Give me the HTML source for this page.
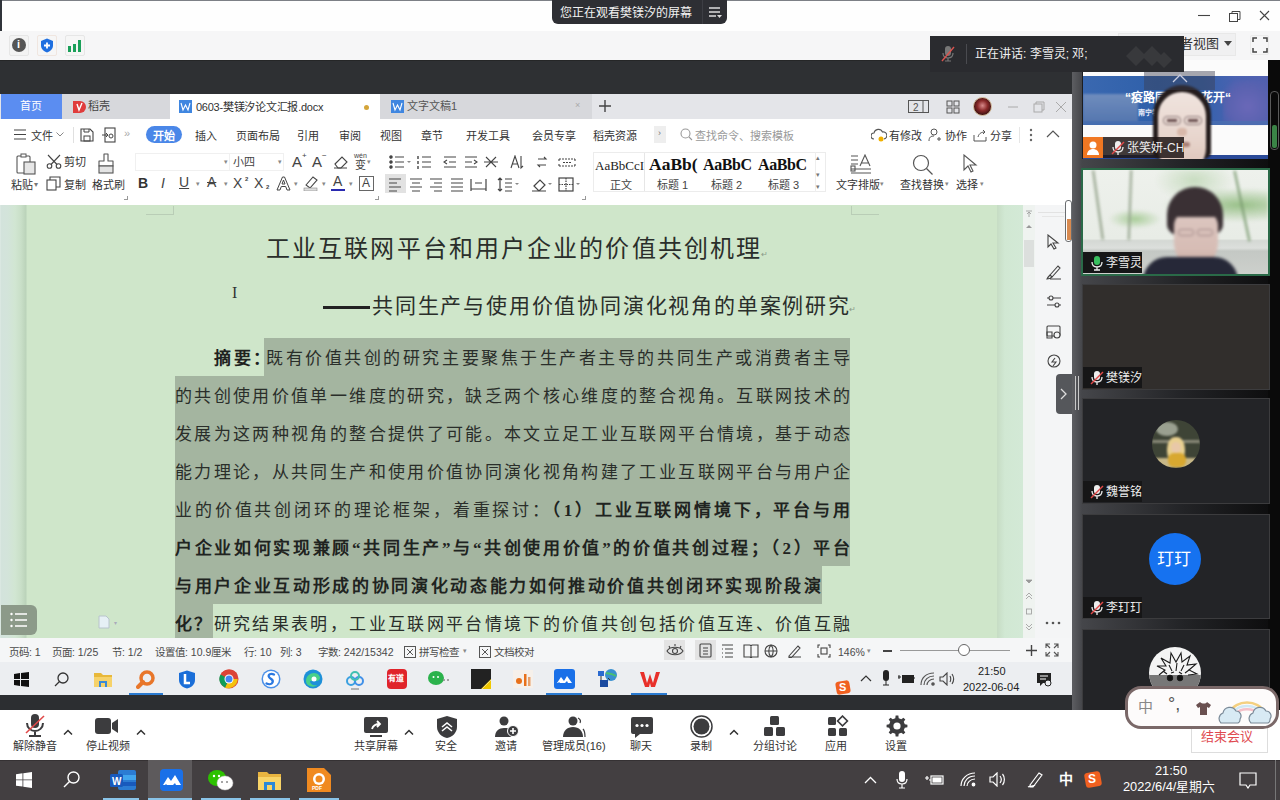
<!DOCTYPE html>
<html lang="zh-CN"><head><meta charset="utf-8">
<style>
*{margin:0;padding:0;box-sizing:border-box}
html,body{width:1280px;height:800px;overflow:hidden;background:#fff;font-family:"Liberation Sans",sans-serif;color:#333}
.a{position:absolute}
.t{position:absolute;white-space:nowrap;line-height:1}
.hl{position:absolute;background:#a4b5a0}
.dl{position:absolute;white-space:nowrap;overflow:visible;font-family:"Liberation Serif",serif;font-size:17px;line-height:20px;height:20px;color:#2a2e2a;font-weight:300;text-align:justify;text-align-last:justify;white-space:normal;word-break:break-all}
.b,.dl b{font-weight:bold;color:#202320}
</style></head><body>
<!-- title bar -->
<div class="a" style="left:0;top:0;width:1280px;height:31px;background:#fefefe;border-top:1px solid #7d8086"></div>
<div class="a" style="left:0;top:0;width:2px;height:31px;background:#30343a"></div>
<div class="a" style="left:552px;top:0;width:175px;height:24px;background:#2e2f34;border-radius:0 0 6px 6px"></div>
<!-- toolbar2 -->
<div class="a" style="left:0;top:31px;width:1280px;height:29px;background:#f6f6f7"></div>
<!-- titlebar content -->
<div class="t" style="left:560px;top:7px;font-size:12px;color:#f2f2f2">您正在观看樊镁汐的屏幕</div>
<div class="a" style="left:702px;top:0;width:1px;height:24px;background:#3d3e44"></div>
<svg class="a" style="left:708px;top:6px" width="14" height="13"><path d="M1 2h11M1 6h11M1 10h7" stroke="#ddd" stroke-width="1.4"/><path d="M9 9h5l-2.5 3z" fill="#ddd"/></svg>
<svg class="a" style="left:1195px;top:8px" width="80" height="16"><path d="M3 7.5h12" stroke="#444" stroke-width="1.1"/><rect x="34.5" y="5.5" width="8" height="8" fill="none" stroke="#444" stroke-width="1"/><path d="M37 5.5V3.5h8v8h-2.5" fill="none" stroke="#444" stroke-width="1"/><path d="M65 3l9 9M74 3l-9 9" stroke="#444" stroke-width="1.1"/></svg>
<!-- toolbar2 content -->
<div class="a" style="left:9px;top:35px;width:20px;height:21px;border:1px solid #e6e6e6;border-radius:2px;background:#f3f3f3"></div>
<div class="a" style="left:12px;top:38px;width:14px;height:14px;border-radius:50%;background:#555"></div>
<div class="t" style="left:17px;top:39px;font-size:11px;color:#fff;font-weight:bold">i</div>
<div class="a" style="left:37px;top:35px;width:20px;height:21px;border:1px solid #f0e6e0;border-radius:2px;background:#f6f6f6"></div>
<svg class="a" style="left:40px;top:38px" width="14" height="15"><path d="M7 0.5L13 3v4.5c0 3.5-3 6-6 7-3-1-6-3.5-6-7V3z" fill="#1f6fe0"/><path d="M7 4.5v6M4 7.5h6" stroke="#fff" stroke-width="1.8"/></svg>
<div class="a" style="left:65px;top:35px;width:20px;height:21px;border:1px solid #e6e6e6;border-radius:2px;background:#f6f6f6"></div>
<svg class="a" style="left:67px;top:39px" width="16" height="14"><rect x="1" y="7" width="3" height="6" fill="#1aa05a"/><rect x="6" y="5" width="3" height="8" fill="#1aa05a"/><rect x="11" y="1" width="3" height="12" fill="#1aa05a"/></svg>
<div class="a" style="left:1118px;top:33px;width:118px;height:23px;background:#f0f0f1;border:1px solid #e8e8e8"></div>
<div class="t" style="left:1180px;top:37px;font-size:13px;color:#333">者视图</div>
<svg class="a" style="left:1224px;top:41px" width="8" height="6"><path d="M0 0h8l-4 5z" fill="#444"/></svg>
<div class="a" style="left:1250px;top:35px;width:19px;height:20px;border:1px solid #ebebeb;border-radius:2px"></div>
<svg class="a" style="left:1252px;top:37px" width="16" height="16"><path d="M1 5V1h4M11 1h4v4M15 11v4h-4M5 15H1v-4" fill="none" stroke="#444" stroke-width="1.5"/></svg>
<!-- dark band -->
<div class="a" style="left:0;top:60px;width:1072px;height:34px;background:#2e3033;border-top:1px solid #252627"></div>
<!-- WPS tab bar -->
<div class="a" style="left:0;top:94px;width:1072px;height:25px;background:#e4e5e9"></div>
<div class="a" style="left:1px;top:94px;width:61px;height:25px;background:#5b8df1"></div>
<div class="a" style="left:62px;top:94px;width:108px;height:25px;background:#d7d8dc"></div>
<div class="a" style="left:170px;top:94px;width:210px;height:25px;background:#fff"></div>
<div class="a" style="left:380px;top:94px;width:212px;height:25px;background:#d7d8dc"></div>
<!-- menu + ribbon -->
<div class="a" style="left:0;top:119px;width:1072px;height:86px;background:#fff"></div>
<!-- wps tabs content -->
<div class="t" style="left:20px;top:101px;font-size:11px;color:#fff">首页</div>
<svg class="a" style="left:72px;top:100px" width="14" height="14"><path d="M1 1h7a6 6 0 0 1 0 12H1z" fill="#e03c3c"/><path d="M5 4l2 6 3-7" fill="none" stroke="#fff" stroke-width="1.4"/></svg>
<div class="t" style="left:88px;top:101px;font-size:11px;color:#444">稻壳</div>
<div class="a" style="left:179px;top:100px;width:13px;height:13px;background:#3f86e0"></div>
<svg class="a" style="left:179px;top:100px" width="13" height="13"><path d="M2 3l2 7 2.5-5 2.5 5 2-7" fill="none" stroke="#fff" stroke-width="1.1"/></svg>
<div class="t" style="left:196px;top:102px;font-size:11px;color:#333;letter-spacing:-0.25px">0603-樊镁汐论文汇报.docx</div>
<div class="a" style="left:364px;top:105px;width:5px;height:5px;border-radius:50%;background:#d4a53a"></div>
<div class="a" style="left:391px;top:100px;width:13px;height:13px;background:#3f86e0"></div>
<svg class="a" style="left:391px;top:100px" width="13" height="13"><path d="M2 3l2 7 2.5-5 2.5 5 2-7" fill="none" stroke="#fff" stroke-width="1.1"/></svg>
<div class="t" style="left:407px;top:101px;font-size:11px;color:#555">文字文稿1</div>
<div class="t" style="left:575px;top:101px;font-size:9px;color:#aaa">×</div>
<svg class="a" style="left:599px;top:100px" width="12" height="12"><path d="M6 0v12M0 6h12" stroke="#444" stroke-width="1.4"/></svg>
<svg class="a" style="left:908px;top:99px" width="24" height="15"><rect x="0.5" y="1.5" width="20" height="12" fill="none" stroke="#555" stroke-width="1"/><path d="M15 1v13" stroke="#555"/><text x="5" y="11.5" font-size="10" fill="#555" font-family="Liberation Sans">2</text></svg>
<svg class="a" style="left:946px;top:100px" width="14" height="14"><rect x="1" y="1" width="5" height="5" fill="none" stroke="#555"/><rect x="8" y="1" width="5" height="5" fill="none" stroke="#555"/><rect x="1" y="8" width="5" height="5" fill="none" stroke="#555"/><rect x="8" y="8" width="5" height="5" fill="none" stroke="#555"/></svg>
<div class="a" style="left:973px;top:97px;width:19px;height:19px;border-radius:50%;background:radial-gradient(circle at 50% 45%,#d88a8a 0,#8a2a2a 40%,#3a1010 75%);border:1px solid #c9b090"></div>
<svg class="a" style="left:1006px;top:100px" width="62" height="14"><path d="M2 7h10" stroke="#aaa"/><rect x="28" y="4" width="8" height="8" fill="none" stroke="#aaa"/><path d="M30 4V2h8v8h-2" fill="none" stroke="#aaa"/><path d="M50 2l10 10M60 2L50 12" stroke="#aaa"/></svg>
<!-- menu row -->
<svg class="a" style="left:14px;top:129px" width="12" height="11"><path d="M0 1h12M0 5.5h12M0 10h12" stroke="#444" stroke-width="1.2"/></svg>
<div class="t" style="left:31px;top:130.5px;font-size:11px;color:#333">文件</div>
<svg class="a" style="left:56px;top:132px" width="8" height="5"><path d="M0.5 0.5l3.5 3.5 3.5-3.5" fill="none" stroke="#888"/></svg>
<div class="a" style="left:73px;top:127px;width:1px;height:16px;background:#e0e0e0"></div>
<svg class="a" style="left:80px;top:128px" width="14" height="14"><path d="M1 1h9l3 3v9H1z" fill="none" stroke="#444" stroke-width="1.1"/><rect x="4" y="8" width="6" height="5" fill="none" stroke="#444"/><path d="M4 1v3h5V1" fill="none" stroke="#444"/></svg>
<svg class="a" style="left:102px;top:127px" width="14" height="16"><rect x="3" y="1" width="10" height="14" fill="none" stroke="#444" stroke-width="1.1"/><path d="M0 8h6M4 6l2 2-2 2" fill="none" stroke="#444"/><circle cx="9" cy="9" r="2" fill="none" stroke="#444"/></svg>
<div class="t" style="left:124px;top:128px;font-size:11px;color:#aaa">»</div>
<div class="a" style="left:146px;top:126px;width:36px;height:17px;border-radius:9px;background:#4a87e8"></div>
<div class="t" style="left:153px;top:130.5px;font-size:11px;color:#fff;font-weight:bold">开始</div>
<div class="t" style="left:195px;top:130.5px;font-size:11px;color:#333">插入</div>
<div class="t" style="left:236px;top:130.5px;font-size:11px;color:#333">页面布局</div>
<div class="t" style="left:297px;top:130.5px;font-size:11px;color:#333">引用</div>
<div class="t" style="left:339px;top:130.5px;font-size:11px;color:#333">审阅</div>
<div class="t" style="left:380px;top:130.5px;font-size:11px;color:#333">视图</div>
<div class="t" style="left:421px;top:130.5px;font-size:11px;color:#333">章节</div>
<div class="t" style="left:466px;top:130.5px;font-size:11px;color:#333">开发工具</div>
<div class="t" style="left:532px;top:130.5px;font-size:11px;color:#333">会员专享</div>
<div class="t" style="left:593px;top:130.5px;font-size:11px;color:#333">稻壳资源</div>
<div class="a" style="left:654px;top:126px;width:12px;height:17px;background:#eeeeee"></div>
<div class="t" style="left:658px;top:129px;font-size:9px;color:#777">›</div>
<svg class="a" style="left:680px;top:128px" width="13" height="13"><circle cx="5.5" cy="5.5" r="4.5" fill="none" stroke="#999" stroke-width="1.1"/><path d="M9 9l3 3" stroke="#999" stroke-width="1.1"/></svg>
<div class="t" style="left:695px;top:130.5px;font-size:11px;color:#999">查找命令、搜索模板</div>
<svg class="a" style="left:871px;top:128px" width="16" height="14"><path d="M3 11a3 3 0 0 1 0-6 4.5 4.5 0 0 1 8.5-1A3.5 3.5 0 0 1 13 11" fill="none" stroke="#555" stroke-width="1.1"/><circle cx="10" cy="11" r="2.5" fill="#f0b000"/></svg>
<div class="t" style="left:889px;top:130.5px;font-size:11px;color:#333">有修改</div>
<svg class="a" style="left:928px;top:128px" width="14" height="14"><circle cx="6" cy="4" r="3" fill="none" stroke="#555"/><path d="M1 13c0-4 2-5 5-5M9 11h4M11 9v4" fill="none" stroke="#555"/></svg>
<div class="t" style="left:945px;top:130.5px;font-size:11px;color:#333">协作</div>
<svg class="a" style="left:973px;top:128px" width="14" height="14"><path d="M1 7v6h12V9" fill="none" stroke="#555"/><path d="M5 9c1-4 4-5 7-5M10 2l2 2-2 2" fill="none" stroke="#555"/></svg>
<div class="t" style="left:990px;top:130.5px;font-size:11px;color:#333">分享</div>
<div class="a" style="left:1019px;top:127px;width:1px;height:16px;background:#e6e6e6"></div>
<svg class="a" style="left:1029px;top:128px" width="4" height="14"><circle cx="2" cy="2" r="1.2" fill="#666"/><circle cx="2" cy="7" r="1.2" fill="#666"/><circle cx="2" cy="12" r="1.2" fill="#666"/></svg>
<svg class="a" style="left:1046px;top:130px" width="14" height="8"><path d="M1 7l6-6 6 6" fill="none" stroke="#555" stroke-width="1.2"/></svg>
<!-- ribbon -->
<svg class="a" style="left:15px;top:153px" width="22" height="22"><rect x="2" y="3" width="13" height="17" rx="1" fill="none" stroke="#555" stroke-width="1.1"/><rect x="6" y="1" width="5" height="3" fill="#fff" stroke="#555"/><rect x="9" y="9" width="11" height="12" fill="#e6e6e6" stroke="#555" stroke-width="1.1"/></svg>
<div class="t" style="left:11px;top:179.5px;font-size:11px;color:#333">粘贴</div><div class="t" style="left:34px;top:181px;font-size:8px;color:#777">▾</div>
<svg class="a" style="left:46px;top:154px" width="16" height="15"><circle cx="3.5" cy="12" r="2.3" fill="none" stroke="#444" stroke-width="1.1"/><circle cx="12.5" cy="12" r="2.3" fill="none" stroke="#444" stroke-width="1.1"/><path d="M5 10.5L14 1M11 10.5L2 1" stroke="#444" stroke-width="1.1"/></svg>
<div class="t" style="left:64px;top:157px;font-size:11px;color:#333">剪切</div>
<svg class="a" style="left:46px;top:176px" width="15" height="15"><rect x="1" y="4" width="9" height="10" fill="none" stroke="#444" stroke-width="1.1"/><path d="M4 4V1h10v10h-4" fill="none" stroke="#444" stroke-width="1.1"/></svg>
<div class="t" style="left:64px;top:179.5px;font-size:11px;color:#333">复制</div>
<svg class="a" style="left:97px;top:153px" width="18" height="22"><path d="M7 1h4v7h5v5H2V8h5z" fill="#fff" stroke="#555" stroke-width="1.1" stroke-linejoin="round"/><rect x="2" y="13" width="14" height="7" fill="#e4e4e4" stroke="#555" stroke-width="1.1"/></svg>
<div class="t" style="left:92px;top:179.5px;font-size:11px;color:#333">格式刷</div>
<div class="a" style="left:135px;top:153px;width:95px;height:18px;border:1px solid #f0f0f0"></div>
<div class="a" style="left:230px;top:153px;width:54px;height:18px;border:1px solid #f0f0f0;border-left:none"></div>
<div class="t" style="left:224px;top:158px;font-size:7px;color:#888">▾</div>
<div class="t" style="left:233px;top:157px;font-size:11px;color:#444">小四</div>
<div class="t" style="left:278px;top:158px;font-size:7px;color:#888">▾</div>
<div class="t" style="left:292px;top:154px;font-size:15px;color:#444">A</div><div class="t" style="left:302px;top:152px;font-size:8px;color:#444">+</div>
<div class="t" style="left:312px;top:154px;font-size:15px;color:#444">A</div><div class="t" style="left:322px;top:152px;font-size:8px;color:#444">−</div>
<svg class="a" style="left:333px;top:155px" width="15" height="14"><path d="M2 9l7-7 5 5-6 6H5z" fill="none" stroke="#444" stroke-width="1.1"/><path d="M1 13h13" stroke="#444"/></svg>
<div class="t" style="left:354px;top:152px;font-size:7px;color:#444">wén</div><div class="t" style="left:355px;top:160px;font-size:11px;color:#444">变</div><div class="t" style="left:367px;top:158px;font-size:7px;color:#888">▾</div>
<div class="t" style="left:138px;top:176px;font-size:14px;color:#333;font-weight:bold">B</div>
<div class="t" style="left:161px;top:176px;font-size:14px;color:#444;font-style:italic">I</div>
<div class="t" style="left:179px;top:175px;font-size:14px;color:#444;text-decoration:underline">U</div><div class="t" style="left:196px;top:180px;font-size:7px;color:#888">▾</div>
<div class="t" style="left:207px;top:175px;font-size:14px;color:#444;text-decoration:line-through">A</div><div class="t" style="left:224px;top:180px;font-size:7px;color:#888">▾</div>
<div class="t" style="left:233px;top:176px;font-size:14px;color:#444">X</div><div class="t" style="left:245px;top:176px;font-size:6px;color:#444;font-weight:bold">2</div>
<div class="t" style="left:254px;top:176px;font-size:14px;color:#444">X</div><div class="t" style="left:266px;top:184px;font-size:6px;color:#444;font-weight:bold">2</div>
<svg class="a" style="left:276px;top:176px" width="15" height="15" fill="none" stroke="#444" stroke-width="1"><path d="M1 14L6.5 1h2L14 14h-3l-1.3-3.5H5.3L4 14zM6 8h3L7.5 4z"/></svg><div class="t" style="left:294px;top:180px;font-size:7px;color:#888">▾</div>
<svg class="a" style="left:303px;top:175px" width="16" height="16"><path d="M3 10l7-8 4 3-7 8z" fill="none" stroke="#444" stroke-width="1.1"/><rect x="1" y="13" width="13" height="3" fill="#ddd" stroke="#888" stroke-width="0.6"/></svg><div class="t" style="left:322px;top:180px;font-size:7px;color:#888">▾</div>
<div class="t" style="left:333px;top:174px;font-size:14px;color:#444">A</div><div class="a" style="left:331px;top:189px;width:14px;height:2px;background:#2a2ab0"></div><div class="t" style="left:349px;top:180px;font-size:7px;color:#888">▾</div>
<div class="a" style="left:359px;top:176px;width:15px;height:15px;border:1px solid #666"></div><div class="t" style="left:362px;top:177px;font-size:12px;color:#444">A</div>
<div class="a" style="left:124px;top:196px;width:4px;height:4px;border-right:1px solid #999;border-bottom:1px solid #999"></div>
<div class="a" style="left:375px;top:196px;width:4px;height:4px;border-right:1px solid #999;border-bottom:1px solid #999"></div>
<div class="a" style="left:582px;top:196px;width:4px;height:4px;border-right:1px solid #999;border-bottom:1px solid #999"></div>
<svg class="a" style="left:389px;top:155px" width="195" height="15" fill="none" stroke="#444" stroke-width="1.1">
<circle cx="2" cy="2" r="1.2" fill="#444"/><circle cx="2" cy="7" r="1.2" fill="#444"/><circle cx="2" cy="12" r="1.2" fill="#444"/><path d="M6 2h9M6 7h9M6 12h9"/><path d="M18 6l2 2 2-2" fill="#888" stroke="none"/>
<path d="M29 1v3M29 6v3M29 11v3" stroke-width="1.4"/><path d="M33 2h9M33 7h9M33 12h9"/>
<path d="M55 2h12M60 7h7M55 12h12M58 5l-3 2 3 2"/>
<path d="M76 2h12M76 7h7M76 12h12M85 5l3 2-3 2"/>
<path d="M97 2l5 5 5-5M97 12l5-5 5 5M95 7h14"/>
<path d="M122 13l4-12 4 12M123 9h6M132 1v12l2-2"/>
<path d="M149 4h8l-2-2M157 10h-8l2 2"/>
<path d="M170 4h16M170 11h16M170 4v3M186 4v3M170 11v-3M186 11v-3M174 7.5h8" stroke-dasharray="2 1"/>
</svg>
<div class="a" style="left:385px;top:174px;width:21px;height:19px;background:#e2e2e2"></div>
<svg class="a" style="left:389px;top:177px" width="195" height="15" fill="none" stroke="#444" stroke-width="1.2">
<path d="M0 2h12M0 6h8M0 10h12M0 14h8"/>
<path d="M21 2h12M23 6h8M21 10h12M23 14h8"/>
<path d="M41 2h12M45 6h8M41 10h12M45 14h8"/>
<path d="M62 2h12M62 6h12M62 10h12M62 14h12"/>
<path d="M82 2v12M97 2v12M82 12h15M86 6h7"/>
<path d="M111 1v13M109 3l2-2 2 2M109 12l2 2 2-2M116 2h7M116 6h7M116 10h7M116 14h7"/><path d="M126 6l2 2 2-2" fill="#888" stroke="none"/>
<path d="M145 9l6-6 5 5-6 6zM143 14h14"/><path d="M159 6l2 2 2-2" fill="#888" stroke="none"/>
<rect x="170" y="1" width="14" height="13"/><path d="M177 1v13M170 7.5h14" stroke-dasharray="1.5 1"/><path d="M187 6l2 2 2-2" fill="#888" stroke="none"/>
</svg>
<div class="a" style="left:593px;top:152px;width:52px;height:40px;border:1px solid #e6e6e6"></div>
<div class="t" style="left:595px;top:159px;font-size:13px;color:#222;font-family:'Liberation Serif',serif">AaBbCcI</div>
<div class="t" style="left:610px;top:179.5px;font-size:11px;color:#444">正文</div>
<div class="a" style="left:593px;top:152px;width:233px;height:40px;border:1px solid #ececec"></div><div class="t" style="left:649px;top:156px;font-size:17.5px;color:#111;font-weight:bold;font-family:'Liberation Serif',serif">AaBb(</div>
<div class="t" style="left:657px;top:179.5px;font-size:11px;color:#444">标题 1</div>
<div class="t" style="left:703px;top:157px;font-size:16px;color:#111;font-weight:bold;font-family:'Liberation Serif',serif;letter-spacing:-0.4px">AaBbC</div>
<div class="t" style="left:711px;top:179.5px;font-size:11px;color:#444">标题 2</div>
<div class="t" style="left:758px;top:157px;font-size:16px;color:#111;font-weight:bold;font-family:'Liberation Serif',serif;letter-spacing:-0.4px">AaBbC</div>
<div class="t" style="left:768px;top:179.5px;font-size:11px;color:#444">标题 3</div>
<div class="a" style="left:815px;top:152px;width:1px;height:40px;background:#eee"></div>
<div class="t" style="left:816px;top:154px;font-size:7px;color:#777">▴</div>
<div class="t" style="left:816px;top:171px;font-size:7px;color:#777">▾</div>
<div class="t" style="left:816px;top:183px;font-size:7px;color:#777">▾</div>
<svg class="a" style="left:850px;top:154px" width="22" height="20" fill="none" stroke="#555" stroke-width="1.1"><path d="M1 2h7M1 6h7M1 10h7M10 12l5-11 5 11M11.5 9h7M1 15h20M1 19h20"/><rect x="1" y="12" width="4" height="5"/></svg>
<div class="t" style="left:836px;top:179.5px;font-size:11px;color:#333">文字排版</div><div class="t" style="left:880px;top:180px;font-size:7px;color:#888">▾</div>
<svg class="a" style="left:912px;top:154px" width="22" height="22" fill="none" stroke="#555" stroke-width="1.2"><circle cx="9" cy="9" r="7.5"/><path d="M14.5 14.5l6 6"/></svg>
<div class="t" style="left:900px;top:179.5px;font-size:11px;color:#333">查找替换</div><div class="t" style="left:945px;top:180px;font-size:7px;color:#888">▾</div>
<svg class="a" style="left:962px;top:154px" width="16" height="20" fill="none" stroke="#555" stroke-width="1.1"><path d="M2 1v15l4-4 3 6 2-1-3-6h6z"/></svg>
<div class="t" style="left:956px;top:179.5px;font-size:11px;color:#333">选择</div><div class="t" style="left:980px;top:180px;font-size:7px;color:#888">▾</div>
<!-- doc area -->
<div class="a" style="left:0;top:205px;width:1072px;height:433px;background:#d2e6d9"></div><div class="a" style="left:0;top:205px;width:28px;height:433px;background:linear-gradient(90deg,#dde9e4 0,#d3e3dc 1.5px,#d3e4da 8px,#d1e6d2 15px,#c9dfc8 21px,#bcd4bb 25.5px,#cde4c9 27.5px)"></div>
<div class="a" style="left:27px;top:205px;width:970px;height:433px;background:#cfe6ca"></div>
<div class="a" style="left:997px;top:205px;width:26px;height:433px;background:linear-gradient(90deg,#c6dcc4,#d1e8d3 30%,#d3e9d6)"></div>
<div class="a" style="left:1023px;top:205px;width:12px;height:433px;background:#eef2ee"></div>
<div class="a" style="left:1035px;top:205px;width:37px;height:433px;background:#f4f5f6"></div>
<!-- doc content -->
<div class="a" style="left:146px;top:214px;width:28px;height:1px;background:#b9cdb6"></div>
<div class="a" style="left:173px;top:206px;width:1px;height:9px;background:#b9cdb6"></div>
<div class="a" style="left:851px;top:214px;width:28px;height:1px;background:#b9cdb6"></div>
<div class="a" style="left:851px;top:206px;width:1px;height:9px;background:#b9cdb6"></div>
<div class="hl" style="left:264px;top:338px;width:586px;height:38px"></div>
<div class="hl" style="left:175px;top:376px;width:675px;height:190px"></div>
<div class="hl" style="left:175px;top:566px;width:647px;height:38px"></div>
<div class="hl" style="left:175px;top:604px;width:38px;height:34px"></div>
<div class="dl" style="left:266px;top:236px;width:494px;font-size:24px;line-height:26px;height:26px">工业互联网平台和用户企业的价值共创机理</div>
<div class="t" style="left:761px;top:251px;font-size:8px;color:#8a9a88">↵</div>
<div class="a" style="left:323px;top:306px;width:47px;height:2.5px;background:#222"></div><div class="dl" style="left:372px;top:294px;width:477px;font-size:21px;line-height:24px;height:24px">共同生产与使用价值协同演化视角的单案例研究</div>
<div class="t" style="left:849px;top:306px;font-size:8px;color:#8a9a88">↵</div>
<div class="t b" style="left:214px;top:349.5px;font-size:17px;letter-spacing:2.6px;color:#1e221e">摘要：</div>
<div class="dl" style="left:266px;top:348.5px;width:584px">既有价值共创的研究主要聚焦于生产者主导的共同生产或消费者主导</div>
<div class="dl" style="left:175px;top:386.5px;width:675px">的共创使用价值单一维度的研究，缺乏两个核心维度的整合视角。互联网技术的</div>
<div class="dl" style="left:175px;top:424.5px;width:675px">发展为这两种视角的整合提供了可能。本文立足工业互联网平台情境，基于动态</div>
<div class="dl" style="left:175px;top:462.5px;width:675px">能力理论，从共同生产和使用价值协同演化视角构建了工业互联网平台与用户企</div>
<div class="dl" style="left:175px;top:500.5px;width:675px">业的价值共创闭环的理论框架，着重探讨：<b>（1）工业互联网情境下，平台与用</b></div>
<div class="dl b" style="left:175px;top:538.5px;width:675px">户企业如何实现兼顾“共同生产”与“共创使用价值”的价值共创过程；（2）平台</div>
<div class="dl b" style="left:175px;top:576.5px;width:646px">与用户企业互动形成的协同演化动态能力如何推动价值共创闭环实现阶段演</div>
<div class="dl" style="left:175px;top:614.5px;width:675px"><b>化？</b>研究结果表明，工业互联网平台情境下的价值共创包括价值互连、价值互融</div>
<div class="t" style="left:232px;top:285px;font-size:16px;color:#333;font-family:'Liberation Serif',serif">I</div>
<!-- doc side -->
<div class="a" style="left:1023px;top:205px;width:12px;height:433px;background:#eff3f0"></div>
<svg class="a" style="left:1024px;top:209px" width="10" height="24"><path d="M2 2h6M5 3v5M3 5l2-2 2 2" fill="none" stroke="#999" stroke-width="0.8"/><path d="M2 19l3-3 3 3z" fill="#999"/></svg>
<div class="a" style="left:1024px;top:240px;width:10px;height:27px;background:#dcdfdd"></div>
<svg class="a" style="left:1024px;top:578px" width="10" height="56" fill="none" stroke="#999" stroke-width="0.8"><path d="M2 2l3 3 3-3z" fill="#999"/><path d="M2 18l3-3 3 3M2 21l3-3 3 3"/><rect x="2.5" y="31" width="5" height="5"/><path d="M2 46l3 3 3-3M2 49l3 3 3-3"/></svg>
<div class="a" style="left:1038px;top:212px;width:28px;height:1px;background:#e2e2e2"></div>
<div class="a" style="left:1042px;top:216px;width:22px;height:1px;background:#e6e6e6"></div>
<svg class="a" style="left:1046px;top:234px" width="14" height="16" fill="none" stroke="#444" stroke-width="1.1"><path d="M2 1v12l3-3 3 5 2-1-3-5h5z"/></svg>
<svg class="a" style="left:1046px;top:264px" width="16" height="16" fill="none" stroke="#444" stroke-width="1.1"><path d="M4 11l8-9 2 2-8 9zM1 15c1-2 2-3 3-4l2 2c-1 1-3 2-5 2zM4 15h11"/></svg>
<svg class="a" style="left:1046px;top:294px" width="16" height="16" fill="none" stroke="#444" stroke-width="1.1"><path d="M1 4h14M1 11h14"/><circle cx="5" cy="4" r="2" fill="#f4f5f6"/><circle cx="11" cy="11" r="2" fill="#f4f5f6"/></svg>
<svg class="a" style="left:1046px;top:324px" width="16" height="16" fill="none" stroke="#444" stroke-width="1.1"><rect x="1" y="2" width="13" height="10" rx="1"/><path d="M1 8h5v6H1z"/><circle cx="11" cy="11" r="3" fill="#f4f5f6"/></svg>
<svg class="a" style="left:1046px;top:354px" width="16" height="16" fill="none" stroke="#444" stroke-width="1.1"><path d="M8 1a6 6 0 1 1 0 12 6 6 0 1 1 0-12zM9 4l-3 4h4l-3 4"/></svg>
<svg class="a" style="left:1045px;top:620px" width="16" height="6"><circle cx="2" cy="3" r="1.3" fill="#555"/><circle cx="8" cy="3" r="1.3" fill="#555"/><circle cx="14" cy="3" r="1.3" fill="#555"/></svg>
<div class="a" style="left:1056px;top:374px;width:16px;height:40px;background:#55575b;border-radius:4px 0 0 4px"></div>
<svg class="a" style="left:1060px;top:388px" width="8" height="12"><path d="M1 1l5 5-5 5" fill="none" stroke="#ddd" stroke-width="1.3"/></svg>
<div class="a" style="left:1065px;top:200px;width:7px;height:42px;border:1.5px solid #6a6d70;border-radius:3px;background:#fff"></div>
<div class="a" style="left:1066.5px;top:219px;width:4px;height:21px;background:#d88a50"></div>
<!-- nav button -->
<div class="a" style="left:1px;top:605px;width:36px;height:30px;background:#8c9a89;border-radius:0 6px 6px 0"></div>
<svg class="a" style="left:10px;top:612px" width="18" height="16"><circle cx="1.5" cy="2" r="1.2" fill="#fff"/><circle cx="1.5" cy="8" r="1.2" fill="#fff"/><circle cx="1.5" cy="14" r="1.2" fill="#fff"/><path d="M5 2h12M5 8h12M5 14h12" stroke="#fff" stroke-width="1.5"/></svg>
<svg class="a" style="left:98px;top:615px" width="16" height="14"><path d="M1 1h7l3 3v9H1z" fill="#e6f0f5" stroke="#b8c4cc"/></svg>
<div class="t" style="left:114px;top:620px;font-size:6px;color:#aab">▾</div>
<!-- status bar -->
<div class="a" style="left:0;top:638px;width:1072px;height:24px;background:#f5f6f7"></div>
<!-- status content --><!-- status content -->
<div class="t" style="left:9px;top:646.5px;font-size:10.5px;color:#4a4a4a">页码: 1</div>
<div class="t" style="left:52px;top:646.5px;font-size:10.5px;color:#4a4a4a">页面: 1/25</div>
<div class="t" style="left:112px;top:646.5px;font-size:10.5px;color:#4a4a4a">节: 1/2</div>
<div class="t" style="left:155px;top:646.5px;font-size:10.5px;color:#4a4a4a">设置值: 10.9厘米</div>
<div class="t" style="left:244px;top:646.5px;font-size:10.5px;color:#4a4a4a">行: 10</div>
<div class="t" style="left:280px;top:646.5px;font-size:10.5px;color:#4a4a4a">列: 3</div>
<div class="t" style="left:318px;top:646.5px;font-size:10.5px;color:#4a4a4a">字数: 242/15342</div>
<svg class="a" style="left:404px;top:646px" width="12" height="12"><rect x="0.5" y="0.5" width="11" height="11" fill="none" stroke="#555"/><path d="M3 3l6 6M9 3l-6 6" stroke="#555"/></svg>
<div class="t" style="left:419px;top:646.5px;font-size:10.5px;color:#4a4a4a">拼写检查</div><div class="t" style="left:463px;top:647px;font-size:7px;color:#888">▾</div>
<svg class="a" style="left:479px;top:646px" width="12" height="12"><rect x="0.5" y="0.5" width="11" height="11" fill="none" stroke="#555"/><path d="M3 3l6 6M9 3l-6 6" stroke="#555"/></svg>
<div class="t" style="left:494px;top:646.5px;font-size:10.5px;color:#4a4a4a">文档校对</div>
<div class="a" style="left:664px;top:640px;width:21px;height:20px;background:#e3e3e3"></div>
<svg class="a" style="left:666px;top:643px" width="18" height="14" fill="none" stroke="#444" stroke-width="1.1"><path d="M1 8c3-5 13-5 16 0-3 5-13 5-16 0z"/><circle cx="9" cy="8" r="2.5"/><path d="M3 3l1 2M9 1v2M15 3l-1 2"/></svg>
<div class="a" style="left:695px;top:640px;width:21px;height:20px;background:#e3e3e3"></div>
<svg class="a" style="left:698px;top:643px" width="140" height="15" fill="none" stroke="#444" stroke-width="1.1">
<rect x="2" y="1" width="11" height="13" rx="1"/><path d="M5 5h5M5 8h5M5 11h5"/>
<path d="M24 2h11M27 6h8M27 10h8M27 14h8M24 6h1M24 10h1M24 14h1"/>
<path d="M46 2h6l1 1 1-1h6v12h-6l-1 1-1-1h-6zM53 3v11"/>
<circle cx="73" cy="8" r="6"/><path d="M67 8h12M73 2c-3 3-3 9 0 12M73 2c3 3 3 9 0 12"/>
<path d="M91 13l9-10 2 2-9 10h-2zM91 14h12"/>
<path d="M122 2h-2v3M130 2h2v3M122 14h-2v-3M130 14h2v-3"/><rect x="123" y="5" width="6" height="6"/>
</svg>
<div class="t" style="left:838px;top:646.5px;font-size:10.5px;color:#4a4a4a">146%</div><div class="t" style="left:867px;top:647px;font-size:7px;color:#888">▾</div>
<div class="a" style="left:883px;top:650px;width:9px;height:1.5px;background:#444"></div>
<div class="a" style="left:900px;top:650px;width:110px;height:1px;background:#999"></div>
<div class="a" style="left:958px;top:644px;width:12px;height:12px;border-radius:50%;background:#fff;border:1.2px solid #666"></div>
<svg class="a" style="left:1026px;top:645px" width="11" height="11"><path d="M5.5 0v11M0 5.5h11" stroke="#444" stroke-width="1.4"/></svg>
<svg class="a" style="left:1045px;top:643px" width="14" height="14" fill="none" stroke="#555" stroke-width="1.1"><path d="M1 5V1h4M1 1l4 4M13 5V1H9M13 1L9 5M1 9v4h4M1 13l4-4M13 9v4H9M13 13L9 9"/></svg>
<!-- inner taskbar -->
<div class="a" style="left:0;top:662px;width:1072px;height:33px;background:#eceef1"></div>
<!-- inner taskbar content -->
<svg class="a" style="left:14px;top:672px" width="15" height="15"><path d="M0 2l6-1v6H0zM7 1l8-1v7H7zM0 8h6v6l-6-1zM7 8h8v7l-8-1z" fill="#111"/></svg>
<svg class="a" style="left:54px;top:672px" width="15" height="15" fill="none" stroke="#333" stroke-width="1.3"><circle cx="9" cy="6" r="5"/><path d="M5.5 9.5L1 14"/></svg>
<svg class="a" style="left:94px;top:672px" width="18" height="15"><path d="M0 1h7l2 2h9v12H0z" fill="#e8b83a"/><rect x="0" y="5" width="18" height="10" fill="#f6d26a"/><rect x="5" y="9" width="8" height="6" fill="#3a8ad8"/><rect x="7" y="11" width="4" height="4" fill="#f6d26a"/></svg>
<svg class="a" style="left:136px;top:670px" width="19" height="19"><circle cx="11" cy="8" r="6" fill="none" stroke="#e8762a" stroke-width="3.5"/><path d="M7 12L2 17" stroke="#e8762a" stroke-width="4" stroke-linecap="round"/></svg>
<div class="a" style="left:129px;top:693px;width:34px;height:2px;background:#2a7ad0"></div>
<svg class="a" style="left:178px;top:670px" width="18" height="19"><path d="M9 0.5L17 3v7c0 5-4 7.5-8 8.5C5 17.5 1 15 1 10V3z" fill="#1a6ed8"/><path d="M7 4v9h5" fill="none" stroke="#fff" stroke-width="2.5"/></svg>
<svg class="a" style="left:219px;top:669px" width="20" height="20"><circle cx="10" cy="10" r="9.5" fill="#db4437"/><path d="M10 10L1.8 5.2A9.5 9.5 0 0 1 18.5 5.5z" fill="#db4437"/><path d="M10 10h8.7A9.5 9.5 0 0 1 6 18.7z" fill="#f4c20d"/><path d="M10 10L6 18.7A9.5 9.5 0 0 1 1.5 5.5z" fill="#0f9d58"/><circle cx="10" cy="10" r="4.5" fill="#fff"/><circle cx="10" cy="10" r="3.5" fill="#4285f4"/></svg>
<svg class="a" style="left:261px;top:669px" width="20" height="20"><circle cx="10" cy="10" r="9.5" fill="#4a90e8"/><circle cx="10" cy="10" r="8" fill="#fff"/><path d="M13 5.5c-3-1.5-6.5 0-5 2.5s5 2.5 3.5 5.5c-1 2-4 2-6 1" fill="none" stroke="#2a78e0" stroke-width="2.3" stroke-linecap="round"/></svg>
<svg class="a" style="left:303px;top:669px" width="20" height="20"><circle cx="10" cy="10" r="9.5" fill="#1e90d8"/><path d="M3 12c0-5 4-8 8-8s6 3 6 5c0 2-2 3-4 3H7c0 3 3 5 7 4-2 3-11 2-11-4z" fill="#48d08a"/><circle cx="11" cy="10" r="2.5" fill="#fff"/></svg>
<svg class="a" style="left:345px;top:670px" width="20" height="20"><circle cx="6" cy="11" r="4" fill="none" stroke="#3aa0e0" stroke-width="2"/><circle cx="14" cy="11" r="4" fill="none" stroke="#4090e8" stroke-width="2"/><circle cx="10" cy="6" r="4" fill="none" stroke="#40c0b0" stroke-width="2"/><path d="M6 19h8" stroke="#777" stroke-width="1"/></svg>
<div class="a" style="left:387px;top:669px;width:20px;height:20px;border-radius:4px;background:#e0242a"></div>
<div class="t" style="left:388px;top:675px;font-size:8px;color:#fff;font-weight:bold">有道</div>
<svg class="a" style="left:428px;top:670px" width="22" height="18"><ellipse cx="8" cy="8" rx="8" ry="7" fill="#2bb24c"/><circle cx="5.5" cy="7" r="1" fill="#fff"/><circle cx="10" cy="7" r="1" fill="#fff"/><circle cx="16" cy="10" r="1" fill="#888"/><circle cx="20" cy="10" r="1" fill="#888"/></svg>
<svg class="a" style="left:471px;top:669px" width="20" height="20"><rect width="20" height="20" fill="#222"/><path d="M10 20l10-10v10z" fill="#f0c800"/><path d="M11 20l9-9" stroke="#fff" stroke-width="0.5"/></svg>
<svg class="a" style="left:513px;top:670px" width="20" height="18"><rect width="20" height="18" fill="#f6f0ea"/><circle cx="6" cy="11" r="3" fill="#e8701a"/><rect x="11" y="4" width="2.5" height="12" fill="#e8701a"/><rect x="15" y="7" width="2.5" height="9" fill="#e8a06a"/></svg>
<svg class="a" style="left:554px;top:669px" width="21" height="20"><rect width="21" height="20" rx="3" fill="#1a70e8"/><path d="M3 14l4-6 3 4 3-5 5 7h-4l-1-2-2 2H6l-1-1-1 1z" fill="#fff"/></svg>
<div class="a" style="left:546px;top:693px;width:36px;height:2px;background:#2a7ad0"></div>
<svg class="a" style="left:596px;top:668px" width="22" height="22"><circle cx="15" cy="7" r="6" fill="#3a90d0"/><path d="M10 5c3 1 5 0 10 3" stroke="#4ac070" stroke-width="2" fill="none"/><rect x="2" y="3" width="6" height="5" fill="#2a6ad0"/><rect x="4" y="12" width="8" height="7" fill="#1a4aa0"/><path d="M5 8v4M12 10l2 2" stroke="#333"/></svg>
<svg class="a" style="left:639px;top:670px" width="21" height="18"><path d="M1 2h4l3 11 3-9 3 9 3-11h4l-5 15h-4l-1-4-1 4H6z" fill="#e8302a"/></svg>
<div class="a" style="left:631px;top:693px;width:36px;height:2px;background:#2a7ad0"></div>
<div class="a" style="left:836px;top:681px;width:14px;height:13px;background:#f06020;border-radius:3px;transform:rotate(-10deg)"></div>
<div class="t" style="left:839px;top:682px;font-size:11px;color:#fff;font-weight:bold">S</div>
<svg class="a" style="left:860px;top:674px" width="12" height="8"><path d="M1 7l5-5 5 5" fill="none" stroke="#333" stroke-width="1.2"/></svg>
<svg class="a" style="left:881px;top:670px" width="10" height="17"><rect x="2" y="0" width="6" height="11" rx="3" fill="#222"/><path d="M5 11v4M2 15h6" stroke="#222"/></svg>
<svg class="a" style="left:898px;top:673px" width="17" height="11"><rect x="4" y="2" width="12" height="8" fill="#222"/><path d="M0 4h3M1 2v4M16 5h1" stroke="#222"/></svg>
<svg class="a" style="left:920px;top:672px" width="16" height="14" fill="none" stroke="#555" stroke-width="1.2"><path d="M1 13c0-7 5-12 13-12M4 13c0-5 4-9 10-9M7 13c0-3 3-6 7-6"/><circle cx="13" cy="12" r="1.2" fill="#555"/></svg>
<svg class="a" style="left:939px;top:672px" width="16" height="14" fill="none" stroke="#444" stroke-width="1.1"><path d="M1 5h3l4-4v12l-4-4H1z"/><path d="M11 4c1 2 1 4 0 6M13 2c2 3 2 7 0 10"/></svg>
<div class="t" style="left:978px;top:666px;font-size:11px;color:#222">21:50</div>
<div class="t" style="left:963px;top:682px;font-size:11px;color:#222">2022-06-04</div>
<svg class="a" style="left:1036px;top:672px" width="16" height="15"><path d="M1 1h14v10H7l-3 3v-3H1z" fill="#222"/><path d="M4 4h8M4 7h6" stroke="#fff" stroke-width="1"/><circle cx="12" cy="11" r="3" fill="#eceef1" stroke="#222"/></svg>
<div class="a" style="left:0;top:695px;width:1072px;height:15px;background:#2c2e31"></div>
<!-- right panel -->
<!-- right panel -->
<div class="a" style="left:1072px;top:60px;width:208px;height:650px;background:#1c1d20"></div>
<div class="a" style="left:1072px;top:60px;width:10px;height:650px;background:linear-gradient(90deg,#5d5e62,#45464a)"></div>
<div class="a" style="left:1075px;top:376px;width:1px;height:34px;background:#c8c8c8"></div>
<div class="a" style="left:1078px;top:376px;width:1px;height:34px;background:#c8c8c8"></div>
<div class="a" style="left:1268px;top:60px;width:12px;height:650px;background:#0a0a0a"></div>
<div class="a" style="left:1270px;top:91px;width:9px;height:59px;border:1.5px solid #5a5a5a;border-radius:4px"></div>
<div class="a" style="left:1272px;top:125px;width:5px;height:23px;background:#3a8346;border-radius:2px"></div>
<!-- separators -->
<div class="a" style="left:1082px;top:159px;width:186px;height:9px;background:linear-gradient(90deg,#45464a,#222326 55%,#0e0e0f)"></div>
<div class="a" style="left:1082px;top:276px;width:186px;height:8px;background:linear-gradient(90deg,#45464a,#222326 55%,#0e0e0f)"></div>
<div class="a" style="left:1082px;top:390px;width:186px;height:8px;background:linear-gradient(90deg,#45464a,#222326 55%,#0e0e0f)"></div>
<div class="a" style="left:1082px;top:504px;width:186px;height:10px;background:linear-gradient(90deg,#45464a,#222326 55%,#0e0e0f)"></div>
<div class="a" style="left:1082px;top:619px;width:186px;height:10px;background:linear-gradient(90deg,#45464a,#222326 55%,#0e0e0f)"></div>
<!-- tile1 -->
<div class="a" style="left:1083px;top:60px;width:185px;height:99px;background:#fbfbfb;overflow:hidden">
 <div class="a" style="left:0;top:16px;width:185px;height:49px;background:linear-gradient(90deg,#3a68b0 0,#2f60aa 40%,#3462ac 65%,#4a62b0 82%,#5260b0 100%)"></div>
 <div class="a" style="left:0;top:34px;width:55px;height:28px;background:linear-gradient(180deg,#7a94c0,#5a7ab0);opacity:0.85;filter:blur(1px)"></div>
 <div class="a" style="left:140px;top:20px;width:45px;height:44px;background:radial-gradient(circle at 55% 60%,#6a68b8,#5a62b0 55%,rgba(80,90,170,0) 85%);filter:blur(1px)"></div>
 <div class="a" style="left:0;top:61px;width:185px;height:4px;background:#4a70b0;opacity:0.7"></div>
 <div class="a" style="left:0;top:95px;width:185px;height:4px;background:#2a4a98"></div>
 <div class="t" style="left:42px;top:32px;font-size:12px;color:#fff;font-weight:bold">“疫路同</div>
 <div class="t" style="left:118px;top:32px;font-size:12px;color:#fff;font-weight:bold">花开“</div>
 <div class="t" style="left:55px;top:49px;font-size:7px;color:#e8ecf8;font-weight:bold">南宁学院</div>
 <div style="position:absolute;left:0;top:0;width:185px;height:99px;filter:blur(1.3px)">
 <div class="a" style="left:70px;top:25px;width:58px;height:75px;border-radius:50% 50% 20% 20% / 40% 40% 10% 10%;background:#241c1c"></div>
 <div class="a" style="left:75px;top:32px;width:48px;height:80px;border-radius:50% 50% 45% 45% / 30% 30% 30% 30%;background:linear-gradient(180deg,#f0e4de 0,#e8d6ce 55%,#dcc2b6 100%)"></div>
  <div class="a" style="left:80px;top:56px;width:18px;height:9px;border:1px solid #8a7878;border-radius:4px"></div>
 <div class="a" style="left:101px;top:56px;width:18px;height:9px;border:1px solid #8a7878;border-radius:4px"></div>
 <div class="a" style="left:84px;top:59px;width:10px;height:3px;background:#6a5050"></div>
 <div class="a" style="left:105px;top:59px;width:10px;height:3px;background:#6a5050"></div>
 <div class="a" style="left:94px;top:68px;width:10px;height:8px;border-radius:4px;background:#d8b8aa"></div>
 <div class="a" style="left:91px;top:82px;width:16px;height:5px;border-radius:4px;background:#a88078"></div>
 </div>
 <div class="a" style="left:61px;top:11px;width:71px;height:19px;background:rgba(60,62,80,0.45)"></div>
 <svg class="a" style="left:89px;top:14px" width="16" height="9"><path d="M1 8l7-7 7 7" fill="none" stroke="#c8cce0" stroke-width="1.3"/></svg>
</div>
<div class="a" style="left:1083px;top:137px;width:20px;height:21px;background:#f07722"></div>
<svg class="a" style="left:1086px;top:140px" width="14" height="15"><circle cx="7" cy="5" r="3.5" fill="#fff"/><path d="M1 15c0-4 3-6 6-6s6 2 6 6z" fill="#fff"/></svg>
<div class="a" style="left:1103px;top:137px;width:81px;height:21px;background:rgba(30,22,22,0.85)"></div>
<svg class="a" style="left:1111px;top:140px" width="14" height="16"><rect x="4" y="1" width="6" height="9" rx="3" fill="#eee"/><path d="M2 7c0 3 2 5 5 5s5-2 5-5M7 12v3" fill="none" stroke="#eee" stroke-width="1.3"/><path d="M1 14L13 2" stroke="#e04848" stroke-width="1.5"/></svg>
<div class="t" style="left:1127px;top:142px;font-size:12px;color:#eee">张笑妍-CH</div>
<!-- tile2 -->
<div class="a" style="left:1081px;top:168px;width:189px;height:108px;border:2px solid #2a6a48;background:#1a1a1a"></div>
<div class="a" style="left:1083px;top:170px;width:185px;height:104px;overflow:hidden;background:linear-gradient(180deg,#eef1ec 0,#e8ece6 66%,#d4d8d4 68%,#dcdfdc 75%,#c4c8c4 78%,#cdd0cc 100%)">
 <div style="position:absolute;left:0;top:0;width:185px;height:104px;filter:blur(1.4px)">
 <div class="a" style="left:0;top:0;width:185px;height:70px;background:radial-gradient(ellipse at 85% 50%,#98c088 0,rgba(152,192,136,0) 35%),radial-gradient(ellipse at 28% 70%,#a8cc98 0,rgba(168,204,152,0) 14%),radial-gradient(ellipse at 60% 15%,#c8dcc0 0,rgba(200,220,192,0) 25%)"></div>
 <div class="a" style="left:14px;top:0;width:2px;height:70px;background:#8a9a80;transform:rotate(-8deg)"></div>
 <div class="a" style="left:46px;top:0;width:2px;height:70px;background:#90a088;transform:rotate(2deg)"></div>
 <div class="a" style="left:158px;top:0;width:2px;height:72px;background:#7a9a70;transform:rotate(-12deg)"></div>
 <div class="a" style="left:84px;top:17px;width:56px;height:50px;border-radius:50% 50% 30% 30% / 55% 55% 25% 25%;background:#3a3034"></div>
 <div class="a" style="left:91px;top:42px;width:44px;height:55px;border-radius:30% 30% 45% 45% / 25% 25% 45% 45%;background:linear-gradient(180deg,#dcc6c0,#d6bcb4 70%,#c4a49a)"></div>
 <div class="a" style="left:91px;top:35px;width:42px;height:12px;border-radius:20px 20px 4px 4px;background:#3a3034"></div>
 <div class="a" style="left:95px;top:59px;width:16px;height:7px;border:1px solid #a08888;border-radius:3px"></div>
 <div class="a" style="left:114px;top:59px;width:16px;height:7px;border:1px solid #a08888;border-radius:3px"></div>
 <div class="a" style="left:60px;top:87px;width:95px;height:30px;border-radius:24px 24px 0 0;background:#262838"></div>
 </div>
</div>
<div class="a" style="left:1083px;top:252px;width:59px;height:21px;background:#161617"></div><svg class="a" style="left:1090px;top:255px" width="14" height="16"><rect x="4" y="1" width="6" height="9" rx="3" fill="#3ac060"/><path d="M2 7c0 3 2 5 5 5s5-2 5-5M7 12v3M4 15h6" fill="none" stroke="#eee" stroke-width="1.3"/></svg><div class="t" style="left:1106px;top:257px;font-size:12px;color:#eee">李雪灵</div>
<!-- tile3 -->
<div class="a" style="left:1082px;top:284px;width:188px;height:106px;border:1px solid #3c3c3e;background:#312e2c"></div>
<div class="a" style="left:1083px;top:367px;width:59px;height:21px;background:#161617"></div><svg class="a" style="left:1090px;top:370px" width="14" height="16"><rect x="4" y="1" width="6" height="9" rx="3" fill="#eee"/><path d="M2 7c0 3 2 5 5 5s5-2 5-5M7 12v3" fill="none" stroke="#eee" stroke-width="1.3"/><path d="M1 14L13 2" stroke="#e04848" stroke-width="1.5"/></svg><div class="t" style="left:1106px;top:372px;font-size:12px;color:#eee">樊镁汐</div>
<!-- tile4 -->
<div class="a" style="left:1082px;top:398px;width:188px;height:106px;border:1px solid #3c3c3e;background:#232427"></div>
<div class="a" style="left:1152px;top:420px;width:48px;height:48px;border-radius:50%;overflow:hidden;background:#3e4436">
 <div style="position:absolute;left:0;top:0;width:48px;height:48px;filter:blur(0.8px)">
 <div class="a" style="left:4px;top:2px;width:22px;height:14px;border-radius:50%;background:#9aa090"></div>
 <div class="a" style="left:0;top:20px;width:48px;height:3px;background:#8a8a78"></div>
 <div class="a" style="left:0;top:38px;width:48px;height:10px;background:#c8b888"></div>
 <div class="a" style="left:15px;top:17px;width:18px;height:26px;border-radius:45%;background:#e8d090"></div>
 <div class="a" style="left:19px;top:22px;width:10px;height:11px;border-radius:50%;background:#e8c8a8"></div>
 <div class="a" style="left:16px;top:33px;width:18px;height:14px;border-radius:6px;background:#d8a830"></div>
 </div>
</div>
<div class="a" style="left:1083px;top:481px;width:59px;height:21px;background:#161617"></div><svg class="a" style="left:1090px;top:484px" width="14" height="16"><rect x="4" y="1" width="6" height="9" rx="3" fill="#eee"/><path d="M2 7c0 3 2 5 5 5s5-2 5-5M7 12v3" fill="none" stroke="#eee" stroke-width="1.3"/><path d="M1 14L13 2" stroke="#e04848" stroke-width="1.5"/></svg><div class="t" style="left:1106px;top:486px;font-size:12px;color:#eee">魏誉铭</div>
<!-- tile5 -->
<div class="a" style="left:1082px;top:514px;width:188px;height:105px;border:1px solid #3c3c3e;background:#232427"></div>
<div class="a" style="left:1149px;top:533px;width:52px;height:52px;border-radius:50%;background:#1672f0"></div>
<div class="t" style="left:1157px;top:551px;font-size:17px;color:#fff">玎玎</div>
<div class="a" style="left:1083px;top:597px;width:59px;height:21px;background:#161617"></div><svg class="a" style="left:1090px;top:600px" width="14" height="16"><rect x="4" y="1" width="6" height="9" rx="3" fill="#eee"/><path d="M2 7c0 3 2 5 5 5s5-2 5-5M7 12v3" fill="none" stroke="#eee" stroke-width="1.3"/><path d="M1 14L13 2" stroke="#e04848" stroke-width="1.5"/></svg><div class="t" style="left:1106px;top:602px;font-size:12px;color:#eee">李玎玎</div>
<!-- tile6 -->
<div class="a" style="left:1082px;top:629px;width:188px;height:90px;border:1px solid #3c3c3e;background:#232427"></div>
<div class="a" style="left:1149px;top:647px;width:52px;height:52px;border-radius:50%;overflow:hidden;background:#f4f4f4">
 <div class="a" style="left:0;top:28px;width:52px;height:24px;background:#777"></div>
 <svg class="a" style="left:2px;top:4px" width="48" height="44" fill="none" stroke="#1a1a1a" stroke-width="1.1"><path d="M8 24l6-5-8-4 9 0-5-8 9 5 1-10 5 9 5-9 1 9 8-6-3 9 9-1-7 6 8 4-9 1"/><path d="M12 20l4 3M18 14l3 6M26 12l-1 8M33 14l-3 6M38 19l-4 3M20 22l3-1M28 21l3 2"/><circle cx="19" cy="27" r="2.6" fill="#111"/><circle cx="29" cy="27" r="2.6" fill="#111"/><path d="M16 36c3 3 12 3 16 0M20 40l2-3M28 40l-2-3" stroke="#ddd"/></svg>
</div>

<!-- meeting toolbar -->
<div class="a" style="left:0;top:710px;width:1280px;height:50px;background:#fff"></div>
<!-- meeting toolbar content -->
<svg class="a" style="left:24px;top:713px" width="22" height="26"><rect x="7" y="1" width="8" height="14" rx="4" fill="#3c3c3e"/><path d="M3 10c0 5 4 8 8 8s8-3 8-8M11 18v4M5 23h12" fill="none" stroke="#3c3c3e" stroke-width="2"/><path d="M2 20L20 3" stroke="#e04848" stroke-width="1.6"/></svg>
<div class="t" style="left:13px;top:741px;font-size:11px;color:#333">解除静音</div>
<svg class="a" style="left:63px;top:729px" width="10" height="6"><path d="M1 5.5l4-4 4 4" fill="none" stroke="#333" stroke-width="1.5"/></svg>

<svg class="a" style="left:95px;top:718px" width="24" height="16"><rect x="0" y="0" width="16" height="16" rx="3" fill="#3c3c3e"/><path d="M17 5l6-4v14l-6-4z" fill="#3c3c3e"/></svg>
<div class="t" style="left:86px;top:741px;font-size:11px;color:#333">停止视频</div>
<svg class="a" style="left:136px;top:729px" width="10" height="6"><path d="M1 5.5l4-4 4 4" fill="none" stroke="#333" stroke-width="1.5"/></svg>

<svg class="a" style="left:364px;top:717px" width="24" height="22"><rect x="0" y="0" width="24" height="16" rx="2" fill="#3c3c3e"/><path d="M6 19h12" stroke="#3c3c3e" stroke-width="2"/><path d="M8 12c1-4 4-5 8-5M13 4l3 3-3 3" fill="none" stroke="#fff" stroke-width="1.8"/></svg>
<div class="t" style="left:354px;top:741px;font-size:11px;color:#333">共享屏幕</div>
<svg class="a" style="left:404px;top:729px" width="10" height="6"><path d="M1 5.5l4-4 4 4" fill="none" stroke="#333" stroke-width="1.5"/></svg>

<svg class="a" style="left:437px;top:716px" width="20" height="22"><path d="M10 0l10 3v8c0 6-5 10-10 11C5 21 0 17 0 11V3z" fill="#3c3c3e"/><path d="M5 11l5-4 5 4M5 15l5-4 5 4" fill="none" stroke="#fff" stroke-width="1.6"/></svg>
<div class="t" style="left:435px;top:741px;font-size:11px;color:#333">安全</div>

<svg class="a" style="left:495px;top:716px" width="24" height="21"><circle cx="9" cy="5" r="4.5" fill="#3c3c3e"/><path d="M0 21c0-6 4-9 9-9s6 1 7 2v7z" fill="#3c3c3e"/><circle cx="18" cy="15" r="5.5" fill="#3c3c3e" stroke="#fff" stroke-width="1"/><path d="M18 12v6M15 15h6" stroke="#fff" stroke-width="1.6"/></svg>
<div class="t" style="left:495px;top:741px;font-size:11px;color:#333">邀请</div>

<svg class="a" style="left:562px;top:716px" width="24" height="21"><circle cx="11" cy="5" r="4.5" fill="#3c3c3e"/><path d="M1 21c0-6 4-10 10-10s10 4 10 10z" fill="#3c3c3e"/><path d="M16 2c2 1 3 3 2 5M21 13c2 2 2 5 2 8" fill="none" stroke="#3c3c3e" stroke-width="1.2"/></svg>
<div class="t" style="left:542px;top:741px;font-size:11px;color:#333">管理成员(16)</div>

<svg class="a" style="left:631px;top:717px" width="22" height="21"><path d="M2 0h18a2 2 0 0 1 2 2v13a2 2 0 0 1-2 2H9l-5 4v-4H2a2 2 0 0 1-2-2V2a2 2 0 0 1 2-2z" fill="#3c3c3e"/><circle cx="6" cy="8.5" r="1.6" fill="#fff"/><circle cx="11" cy="8.5" r="1.6" fill="#fff"/><circle cx="16" cy="8.5" r="1.6" fill="#fff"/></svg>
<div class="t" style="left:630px;top:741px;font-size:11px;color:#333">聊天</div>

<svg class="a" style="left:690px;top:715px" width="23" height="23"><circle cx="11.5" cy="11.5" r="10.5" fill="none" stroke="#3c3c3e" stroke-width="1.5"/><circle cx="11.5" cy="11.5" r="8" fill="#3c3c3e"/></svg>
<div class="t" style="left:690px;top:741px;font-size:11px;color:#333">录制</div>
<svg class="a" style="left:729px;top:729px" width="10" height="6"><path d="M1 5.5l4-4 4 4" fill="none" stroke="#333" stroke-width="1.5"/></svg>

<svg class="a" style="left:763px;top:716px" width="23" height="20"><rect x="7" y="0" width="9" height="9" rx="1.5" fill="#3c3c3e"/><rect x="1" y="11" width="9" height="9" rx="1.5" fill="#3c3c3e"/><rect x="13" y="11" width="9" height="9" rx="1.5" fill="#3c3c3e"/></svg>
<div class="t" style="left:753px;top:741px;font-size:11px;color:#333">分组讨论</div>

<svg class="a" style="left:827px;top:715px" width="22" height="22"><rect x="1" y="2" width="8" height="8" rx="1.5" fill="#3c3c3e"/><rect x="12" y="2.5" width="7" height="7" transform="rotate(45 15.5 6)" fill="none" stroke="#3c3c3e" stroke-width="1.6"/><rect x="1" y="13" width="8" height="8" rx="1.5" fill="#3c3c3e"/><rect x="12" y="13" width="8" height="8" rx="1.5" fill="#3c3c3e"/></svg>
<div class="t" style="left:825px;top:741px;font-size:11px;color:#333">应用</div>

<svg class="a" style="left:886px;top:715px" width="22" height="22"><path d="M18.81 9.29 L21.41 9.64 L21.41 12.36 L18.81 12.71 L17.74 15.31 L19.32 17.40 L17.40 19.32 L15.31 17.74 L12.71 18.81 L12.36 21.41 L9.64 21.41 L9.29 18.81 L6.69 17.74 L4.60 19.32 L2.68 17.40 L4.26 15.31 L3.19 12.71 L0.59 12.36 L0.59 9.64 L3.19 9.29 L4.26 6.69 L2.68 4.60 L4.60 2.68 L6.69 4.26 L9.29 3.19 L9.64 0.59 L12.36 0.59 L12.71 3.19 L15.31 4.26 L17.40 2.68 L19.32 4.60 L17.74 6.69z" fill="#3c3c3e"/><circle cx="11" cy="11" r="3.6" fill="#fff"/></svg>
<div class="t" style="left:885px;top:741px;font-size:11px;color:#333">设置</div>

<div class="a" style="left:1191px;top:726px;width:77px;height:27px;border:1px solid #ddd;background:#fff"></div>
<div class="t" style="left:1201px;top:730px;font-size:13px;color:#e04a50">结束会议</div>
<!-- IME box -->
<div class="a" style="left:1125px;top:686px;width:154px;height:43px;border:3px solid #7a6868;border-radius:16px;background:#fdfbfb"></div>
<div class="t" style="left:1138px;top:699px;font-size:15px;color:#888">中</div>
<div class="t" style="left:1168px;top:695px;font-size:18px;color:#555">°,</div>
<svg class="a" style="left:1196px;top:702px" width="15" height="13"><path d="M4 0l-4 3 2 3 2-1v8h7V5l2 1 2-3-4-3c-1 2-5 2-7 0z" fill="#6a5050"/></svg>
<svg class="a" style="left:1218px;top:690px" width="58" height="36"><path d="M12 22a18 14 0 0 1 34 0" fill="none" stroke="#f4d080" stroke-width="2.5"/><path d="M15 23a15 11 0 0 1 28 0" fill="none" stroke="#d0e8f4" stroke-width="2.5"/><path d="M18 24a12 8 0 0 1 22 0" fill="none" stroke="#f4c0c8" stroke-width="2.5"/><path d="M3 33a6 6 0 0 1 2-10 7 7 0 0 1 13-2 5 5 0 0 1 4 8 4 4 0 0 1-2 4z" fill="#d8eaf4" stroke="#7a8a98" stroke-width="1.2"/><path d="M33 33a6 6 0 0 1 2-10 7 7 0 0 1 13-2 5 5 0 0 1 4 8 4 4 0 0 1-2 4z" fill="#d8eaf4" stroke="#7a8a98" stroke-width="1.2"/></svg>
<!-- windows taskbar -->
<div class="a" style="left:0;top:760px;width:1280px;height:40px;background:#433f41;border-top:1px solid #353133"></div>
<!-- speaking overlay -->
<div class="a" style="left:930px;top:36px;width:254px;height:36px;background:#2a2b2f"></div>
<svg class="a" style="left:940px;top:45px" width="16" height="18"><rect x="5" y="1" width="6" height="10" rx="3" fill="#777"/><path d="M3 8c0 3 2 5 5 5s5-2 5-5M8 13v3M5 16h6" fill="none" stroke="#777" stroke-width="1.2"/><path d="M2 16L14 2" stroke="#d9534f" stroke-width="1.4"/></svg>
<div class="a" style="left:966px;top:44px;width:1px;height:20px;background:#4a4b50"></div>
<div class="t" style="left:975px;top:48px;font-size:12px;color:#f0f0f0">正在讲话: 李雪灵; 邓;</div>
<svg class="a" style="left:1120px;top:42px" width="60" height="28" opacity="0.15"><path d="M6 14l10-10 10 10-10 10z M22 14l10-10 10 10-10 10z M36 18l8-8 8 8-8 8z" fill="#888"/></svg>
<!-- windows taskbar content -->
<svg class="a" style="left:16px;top:772px" width="16" height="16"><path d="M0 2.2l6.5-.9v6.2H0zM7.3 1.2L16 0v7.5H7.3zM0 8.3h6.5v6.3L0 13.7zM7.3 8.3H16V16l-8.7-1.2z" fill="#fff"/></svg>
<svg class="a" style="left:63px;top:771px" width="17" height="17" fill="none" stroke="#fff" stroke-width="1.4"><circle cx="10.5" cy="6.5" r="5.5"/><path d="M6.5 10.5L1 16"/></svg>
<svg class="a" style="left:110px;top:770px" width="26" height="20"><rect x="8" y="0" width="18" height="20" rx="2" fill="#2b7cd3"/><rect x="8" y="5" width="18" height="5" fill="#41a5ee"/><rect x="8" y="12" width="18" height="4" fill="#185abd"/><rect x="0" y="4" width="13" height="13" rx="1.5" fill="#185abd"/><text x="2" y="14.5" font-size="10" font-weight="bold" fill="#fff" font-family="Liberation Sans">W</text></svg>
<div class="a" style="left:148px;top:760px;width:44px;height:40px;background:#5d5a5c"></div>
<svg class="a" style="left:160px;top:769px" width="23" height="22"><rect width="23" height="22" rx="4" fill="#1a70e8"/><path d="M3 16l5-8 3 4 4-6 6 10h-5l-1-2-2 2H7l-1-1-1 1z" fill="#fff"/></svg>
<svg class="a" style="left:208px;top:769px" width="26" height="22"><ellipse cx="9" cy="9" rx="9" ry="8" fill="#2dc100"/><ellipse cx="17" cy="14" rx="8" ry="7" fill="#fff" stroke="#ccc" stroke-width="0.5"/><circle cx="14" cy="13" r="1" fill="#888"/><circle cx="19" cy="13" r="1" fill="#888"/><circle cx="6" cy="7" r="1.2" fill="#fff"/><circle cx="11" cy="7" r="1.2" fill="#fff"/></svg>
<svg class="a" style="left:258px;top:771px" width="23" height="19"><path d="M0 1h9l2 2h12v16H0z" fill="#e8b440"/><rect x="0" y="6" width="23" height="13" fill="#f8d468"/><rect x="6" y="11" width="11" height="8" fill="#2a88d8"/><rect x="9" y="14" width="5" height="5" fill="#f8d468"/></svg>
<svg class="a" style="left:307px;top:768px" width="24" height="24"><path d="M0 0h17l7 7v17H0z" fill="#f08a20"/><circle cx="12" cy="11" r="6" fill="#fff"/><circle cx="12" cy="11" r="3.5" fill="#f08a20"/><text x="5" y="22" font-size="5" fill="#fff" font-family="Liberation Sans" font-weight="bold">PDF</text></svg>
<div class="a" style="left:103px;top:798px;width:36px;height:2px;background:#8ac4e8"></div>
<div class="a" style="left:148px;top:798px;width:44px;height:2px;background:#8ac4e8"></div>
<div class="a" style="left:201px;top:798px;width:40px;height:2px;background:#8ac4e8"></div>
<div class="a" style="left:250px;top:798px;width:40px;height:2px;background:#8ac4e8"></div>
<div class="a" style="left:299px;top:798px;width:40px;height:2px;background:#8ac4e8"></div>
<svg class="a" style="left:864px;top:776px" width="13" height="8"><path d="M1 7l5.5-5.5L12 7" fill="none" stroke="#fff" stroke-width="1.3"/></svg>
<svg class="a" style="left:896px;top:771px" width="12" height="18"><rect x="3" y="0" width="6" height="11" rx="3" fill="#fff"/><path d="M1 8c0 3 2 5 5 5s5-2 5-5M6 13v4M3 17h6" fill="none" stroke="#fff" stroke-width="1.2"/></svg>
<svg class="a" style="left:925px;top:774px" width="19" height="12" fill="none" stroke="#fff" stroke-width="1.2"><rect x="6" y="2" width="12" height="8"/><path d="M0 4h4M2 2v4M4 6h2"/><rect x="8" y="4" width="8" height="4" fill="#fff"/></svg>
<svg class="a" style="left:960px;top:772px" width="17" height="15" fill="none" stroke="#fff" stroke-width="1.2"><path d="M1 14c0-7 6-13 14-13M4 14c0-5 4-10 11-10M7 14c0-3 3-7 8-7"/><circle cx="13.5" cy="12.5" r="1.3" fill="#fff"/></svg>
<svg class="a" style="left:989px;top:772px" width="17" height="15" fill="none" stroke="#fff" stroke-width="1.2"><path d="M1 5h3l4-4v13l-4-4H1z"/><path d="M11 4c1.5 2 1.5 5 0 7M13.5 2c2.5 3 2.5 8 0 11"/></svg>
<svg class="a" style="left:1027px;top:771px" width="16" height="17" fill="none" stroke="#fff" stroke-width="1.2"><path d="M3 14l9-12 3 2-9 12H3zM1 16c3-2 5 0 7-2"/></svg>
<div class="t" style="left:1059px;top:772px;font-size:14px;color:#fff;font-weight:bold">中</div>
<div class="a" style="left:1085px;top:772px;width:16px;height:15px;background:#f06020;border-radius:3px;transform:rotate(-10deg)"></div>
<div class="t" style="left:1088px;top:773px;font-size:12px;color:#fff;font-weight:bold">S</div>
<div class="t" style="left:1155px;top:765px;font-size:12.8px;color:#fff">21:50</div>
<div class="t" style="left:1123px;top:781px;font-size:12.8px;color:#fff">2022/6/4/星期六</div>
<svg class="a" style="left:1239px;top:772px" width="18" height="17" fill="none" stroke="#fff" stroke-width="1.2"><path d="M1 1h16v12h-6l-2 3-2-3H1z"/></svg>
<div class="a" style="left:1275px;top:760px;width:1px;height:40px;background:#777"></div>
</body></html>
